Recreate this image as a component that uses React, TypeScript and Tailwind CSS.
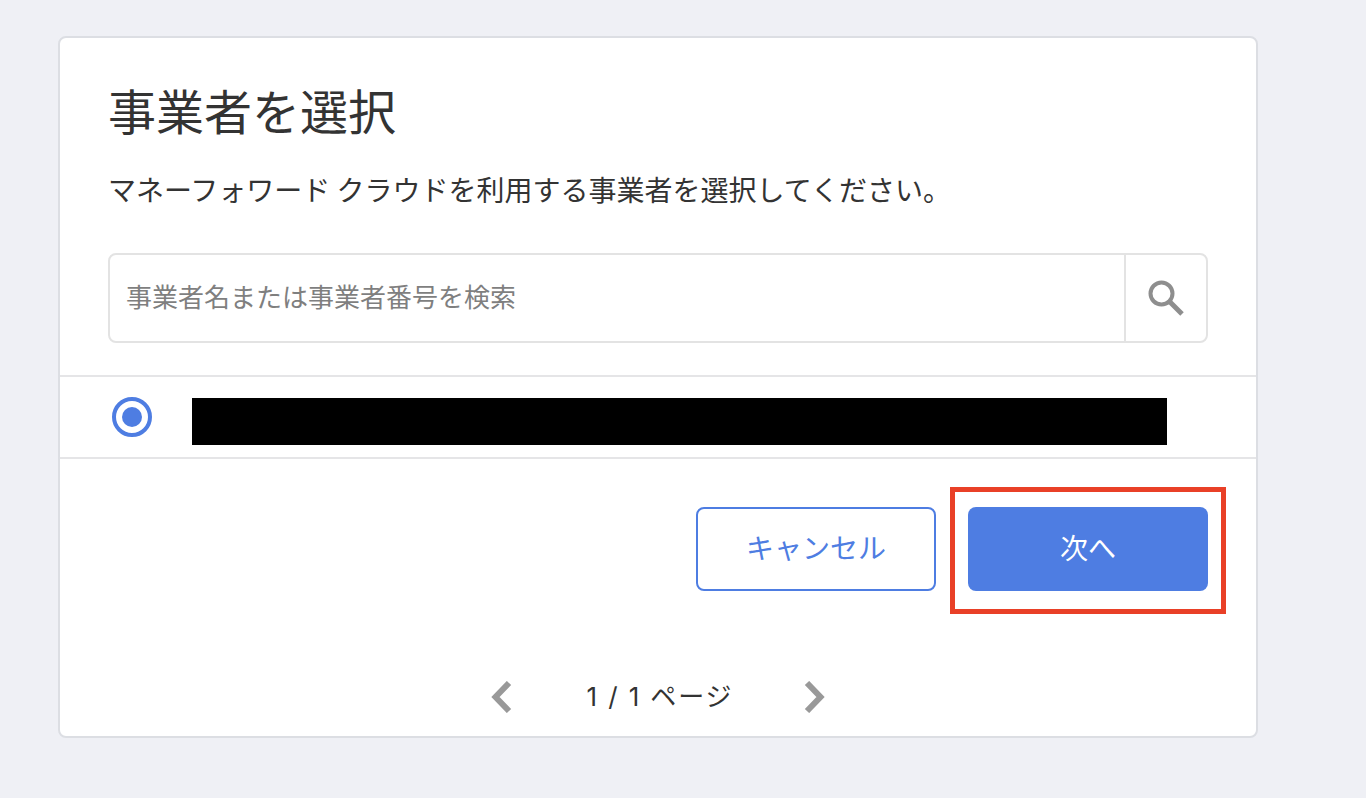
function SearchIcon() {
  return (
    <svg width="38" height="38" viewBox="0 0 38 38" fill="none" stroke="#8e8e8e" strokeWidth="4">
      <circle cx="14.5" cy="14.5" r="11" />
      <path d="M22.5 22.5 L35 35" strokeWidth="5" />
    </svg>
  );
}

function Chevron({ right }: { right?: boolean }) {
  return (
    <svg width="22" height="32" viewBox="0 0 22 32" fill="none" stroke="#999999" strokeWidth="6">
      <path d={right ? 'M3 2 L16.5 16 L3 30' : 'M19 2 L5.5 16 L19 30'} />
    </svg>
  );
}

export default function App() {
  return (
    <div className="h-[798px] overflow-hidden bg-[#eff0f5] pl-[58px] pt-[36px] font-['Noto_Sans_CJK_JP','Liberation_Sans',sans-serif]">
      <div className="h-[702px] w-[1200px] rounded-[8px] border-2 border-[#dcdee3] bg-white">
        <div className="px-[48px] pt-[35px]">
          <h1 className="text-[48px] leading-[72px] text-[#333333]">事業者を選択</h1>
          <p className="mt-[24px] text-[28px] leading-[40px] text-[#333333]">
            マネーフォワード クラウドを利用する事業者を選択してください。
          </p>
          <div className="mt-[44px] flex h-[90px] rounded-[8px] border-2 border-[#e3e3e3]">
            <div className="flex flex-1 items-center pb-[5px] pl-[16px] text-[26px] text-[#7f7f7f]">事業者名または事業者番号を検索</div>
            <div className="flex w-[82px] items-center justify-center border-l-2 border-[#e3e3e3]">
              <SearchIcon />
            </div>
          </div>
        </div>

        <div className="mt-[32px] flex h-[84px] items-center border-y-2 border-[#e5e5e7] pl-[52px]">
          <div className="flex h-[40px] w-[40px] items-center justify-center rounded-full border-4 border-[#4e7de2]">
            <div className="h-[20px] w-[20px] rounded-full bg-[#4e7de2]" />
          </div>
          <div className="ml-[40px] mt-[8px] h-[47px] w-[975px] bg-black" />
        </div>

        <div className="mt-[48px] flex justify-end gap-[32px] pr-[48px]">
          <button className="h-[84px] w-[240px] rounded-[8px] border-2 border-[#4e7de2] bg-white pb-[5px] text-[28px] text-[#4e7de2]">
            キャンセル
          </button>
          <div className="relative">
            <button className="h-[84px] w-[240px] rounded-[8px] bg-[#4e7de2] pb-[5px] text-[28px] text-white">次へ</button>
            <div className="absolute -left-[18px] -top-[20px] h-[127px] w-[276px] border-[5px] border-[#e94027]" />
          </div>
        </div>

        <div className="mt-[90px] flex items-center justify-center">
          <Chevron />
          <span className="ml-[74px] mr-[70px] font-['Inter','Noto_Sans_CJK_JP',sans-serif] text-[26px] leading-[32px] tracking-[1.9px] text-[#333333]">
            1 / 1 ページ
          </span>
          <Chevron right />
        </div>
      </div>
    </div>
  );
}
